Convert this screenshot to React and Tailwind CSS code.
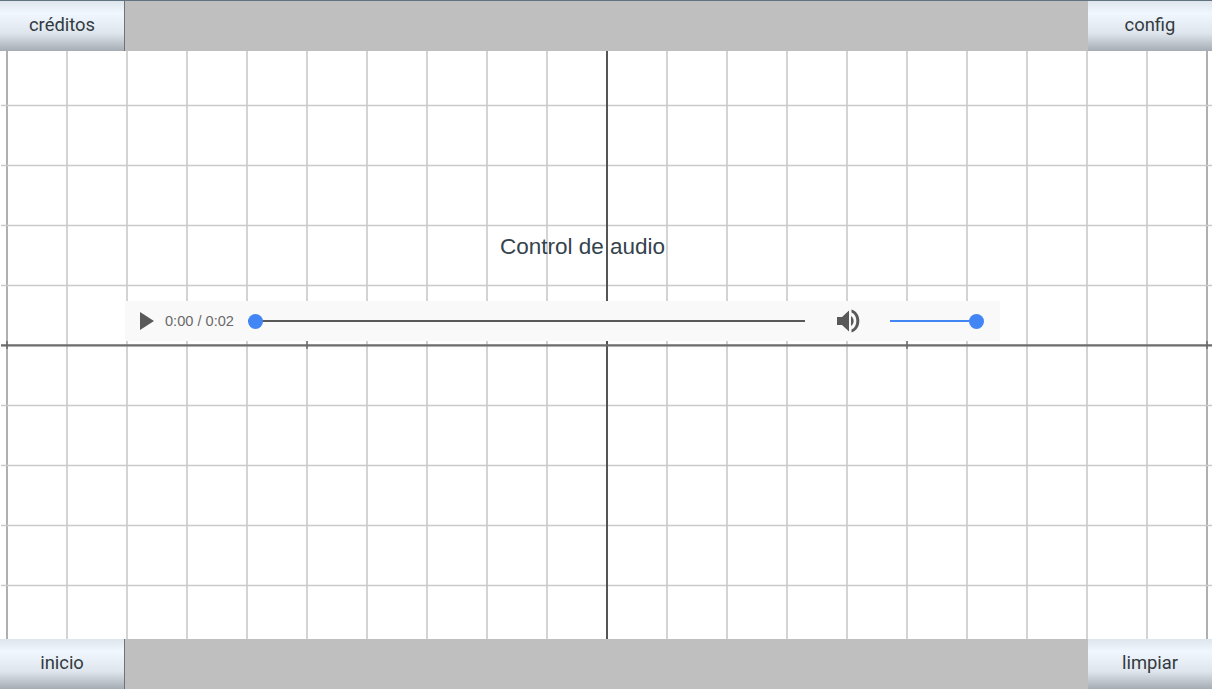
import React from 'react';

const verticals = Array.from({ length: 21 }, (_, i) => 7 + i * 60);
const horizontals = [54.5, 114.5, 174.5, 234.5, 294.5, 354.5, 414.5, 474.5, 534.5];

const GridLines = () => (
  <svg className="absolute inset-0 w-full h-full" width="1212" height="588" viewBox="0 0 1212 588">
    {verticals.map(x => (
      <line key={x} x1={x} x2={x} y1="0" y2="588" stroke={x === 7 || x === 1207 ? '#9c9c9c' : '#cacaca'} strokeWidth="1.6" />
    ))}
    {horizontals.map(y => (
      <line key={y} x1="1" x2="1212" y1={y} y2={y} stroke="#cacaca" strokeWidth="1.6" />
    ))}
    <line x1="607" x2="607" y1="0" y2="588" stroke="#555555" strokeWidth="2" />
    <line x1="1" x2="1212" y1="294.4" y2="294.4" stroke="#6e6e6e" strokeWidth="2.2" />
    {[7, 307, 907, 1207].map(x => (
      <line key={x} x1={x} x2={x} y1="290" y2="298" stroke="#666666" strokeWidth="1.4" />
    ))}
  </svg>
);

const BarButton = ({ label, right }) => (
  <button
    className={`h-full shrink-0 pb-[3px] text-[18.4px] text-[#333a40] font-['Roboto',sans-serif] antialiased bg-[linear-gradient(#dfe5ed,#f0f7ff_25%,#dfe5ed_65%,#a5acb4)] ${right ? 'w-[124px]' : 'w-[125px] border-r border-[#6f7377]'}`}
  >
    {label}
  </button>
);

const Bar = ({ left, right, top }) => (
  <div className={`shrink-0 flex justify-between bg-[#bfbfbf] relative z-10 ${top ? 'h-[51px] border-t border-[#5f7480]' : 'h-[50px]'}`}>
    <BarButton label={left} />
    <BarButton label={right} right />
  </div>
);

const App = () => {
  return (
    <div className="w-[1212px] h-[689px] flex flex-col bg-white overflow-hidden font-['Liberation_Sans',sans-serif]">
      <Bar left="créditos" right="config" top />

      <div className="relative flex-1">
        <GridLines />
        <div className="relative pt-[183px] pl-[125px]">
          <h1 className="w-[915px] text-center text-[22.5px] leading-[26px] text-[#34434e] font-normal antialiased">Control de audio</h1>
          <div className="mt-[41px] w-[875px] h-[40px] flex items-center bg-[#f9f9f9] pl-[15px] text-[#6a6a6a]">
            <svg width="14" height="18" viewBox="0 0 14 18" className="shrink-0">
              <path d="M0 0 L14 9 L0 18 Z" fill="#595959" />
            </svg>
            <span className="ml-[11px] w-[69px] pt-[1px] text-[14.6px] whitespace-nowrap antialiased">0:00 / 0:02</span>
            <div className="ml-[14px] w-[557px] h-[2px] bg-[#595959] flex items-center">
              <span className="w-[15px] h-[15px] rounded-full bg-[#4285f4]" />
            </div>
            <svg width="26" height="26" viewBox="0 0 26 26" className="ml-[31px] shrink-0">
              <path d="M1 9 H6 L13 2.5 V23.5 L6 17 H1 Z" fill="#595959" />
              <path d="M15 8 C18.5 10.5 18.5 15.5 15 18 Z" fill="#595959" />
              <path d="M15.5 1.5 C26 4.5 26 21.5 15.5 24.5 V21.5 C22 19 22 7 15.5 4.5 Z" fill="#595959" />
            </svg>
            <div className="ml-[28px] w-[87px] h-[2px] bg-[#4285f4] relative">
              <span className="absolute right-[-7px] top-[-6.5px] w-[15px] h-[15px] rounded-full bg-[#4285f4]" />
            </div>
          </div>
        </div>
      </div>

      <Bar left="inicio" right="limpiar" />
    </div>
  );
};

export default App;
